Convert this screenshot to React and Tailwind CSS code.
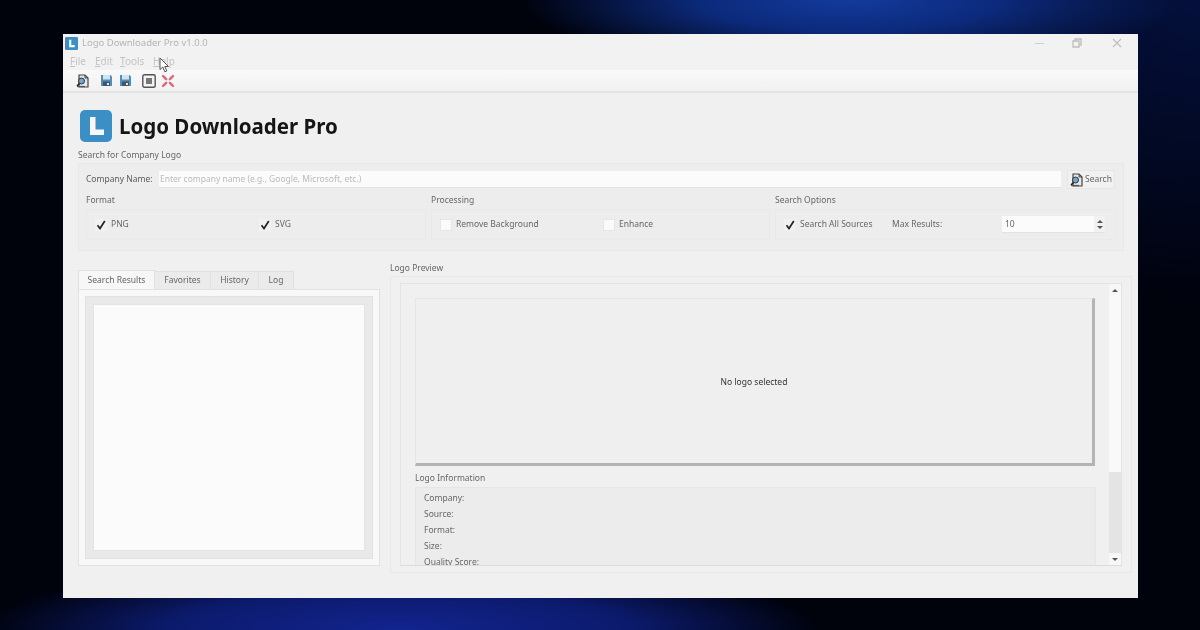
import React from "react";

const CheckMark = () => (
  <svg width="10" height="10" viewBox="0 0 10 10" className="block">
    <path d="M1.5 5.2 L4 8.5 L8.8 1" fill="none" stroke="#222" strokeWidth="1.7" />
  </svg>
);

const CheckBox = ({ label, checked }) => (
  <div className="flex items-center gap-[4px]">
    <div
      className={`w-[12px] h-[12px] flex items-center justify-center ${
        checked ? "bg-[#f1f1f1]" : "bg-[#fafafa] border border-[#e6e6e6]"
      }`}
    >
      {checked && <CheckMark />}
    </div>
    <span>{label}</span>
  </div>
);

const SearchDocIcon = ({ size = 14 }) => (
  <svg width={size} height={size} viewBox="0 0 14 14" className="block shrink-0">
    <path d="M3 1 H9 L12 4 V13 H3 Z" fill="#e8e8e8" stroke="#444" strokeWidth="1.2" />
    <path d="M9 1 V4 H12" fill="none" stroke="#444" />
    <circle cx="5.5" cy="7" r="3" fill="#6fa8d8" stroke="#333" />
    <path d="M3.5 9.5 L1 12" stroke="#222" strokeWidth="1.6" />
    <path d="M1 12.5 H9" stroke="#555" strokeWidth="1.2" />
  </svg>
);

const SaveIcon = () => (
  <svg width="13" height="13" viewBox="0 0 13 13" className="block">
    <path d="M1 1 H10.5 L12 2.5 V12 H1 Z" fill="#4f8fbd" />
    <rect x="3" y="1" width="7" height="4.5" fill="#d4e4ef" />
    <rect x="3" y="7.5" width="7" height="4.5" fill="#4a545e" />
    <rect x="7" y="9" width="2" height="2" fill="#e6e6e6" />
  </svg>
);

const StopIcon = () => (
  <svg width="14" height="14" viewBox="0 0 14 14" className="block">
    <rect x="0.8" y="0.8" width="12.4" height="12.4" rx="1.5" fill="#f3f3f3" stroke="#555" strokeWidth="1.4" />
    <rect x="4" y="4" width="6" height="6" fill="#777" />
  </svg>
);

const CollapseIcon = () => (
  <svg width="14" height="14" viewBox="0 0 14 14" className="block">
    <g fill="#d8657a" stroke="#d8657a" strokeWidth="0.8">
      <path d="M1 2 L2 1 L5.5 4 L6 6 L4 5.5 Z" />
      <path d="M13 2 L12 1 L8.5 4 L8 6 L10 5.5 Z" />
      <path d="M1 12 L2 13 L5.5 10 L6 8 L4 8.5 Z" />
      <path d="M13 12 L12 13 L8.5 10 L8 8 L10 8.5 Z" />
    </g>
  </svg>
);

const LogoMark = ({ size, radius }) => (
  <svg width={size} height={size} viewBox="0 0 32 32" className="block shrink-0">
    <rect width="32" height="32" rx={radius} fill="#3b8fc4" />
    <path d="M10 7 H15.5 V19.5 H24 V25 H10 Z" fill="#f5f7f8" />
  </svg>
);

const Cursor = () => (
  <svg width="11" height="16" viewBox="0 0 11 16" className="absolute left-[96px] top-[23px]">
    <path d="M1 1 V12.5 L3.8 10 L5.8 14.8 L7.8 14 L5.8 9.5 H9.5 Z" fill="#fff" stroke="#555" strokeWidth="1" />
  </svg>
);

const Tab = ({ label, width, active }) => (
  <div
    className={`flex items-center justify-center border-t border-r border-[#e0e0e0] ${
      active ? "bg-[#f7f7f7] h-[19px] border-l text-[#666]" : "bg-[#ebebeb] h-[18px]"
    }`}
    style={{ width }}
  >
    {label}
  </div>
);

export default function App() {
  return (
    <div className="w-[1200px] h-[630px] overflow-hidden pt-[34px] pl-[63px] bg-[#00020c] bg-[radial-gradient(ellipse_330px_70px_at_850px_0px,#133a9c_0%,#0c2a7c_45%,transparent_100%),radial-gradient(ellipse_420px_70px_at_400px_630px,#12248f_0%,#0c1a6c_55%,transparent_100%),radial-gradient(ellipse_420px_300px_at_1200px_0px,#04103c_0%,transparent_100%)]">
      <div
        className="relative w-[1075px] h-[564px] bg-[#f0f0f0] flex flex-col text-[8.5px] text-[#666] blur-[0.5px]"
        style={{ fontFamily: '"Noto Sans", "Open Sans", sans-serif' }}
      >
        {/* title bar */}
        <div className="h-[18px] flex items-center pl-[2px] bg-[#f2f2f2]">
          <LogoMark size={13} radius={3} />
          <span className="ml-[4px] text-[9.5px] text-[#b4b4b4]">Logo Downloader Pro v1.0.0</span>
          <div className="ml-auto flex items-center text-[#c2c2c2]">
            <div className="w-[9px] h-[1px] bg-[#cfcfcf] mr-[28px]"></div>
            <svg width="10" height="10" viewBox="0 0 10 10" className="block mr-[30px]">
              <path d="M1 3 H7 V9 H1 Z M3 3 V1 H9 V7 H7" fill="none" stroke="#bdbdbd" strokeWidth="1.3" />
            </svg>
            <svg width="10" height="10" viewBox="0 0 10 10" className="block mr-[16px]">
              <path d="M1 1 L9 9 M9 1 L1 9" stroke="#bdbdbd" strokeWidth="1.1" />
            </svg>
          </div>
        </div>

        {/* menu bar */}
        <div className="h-[18px] flex items-center pl-[7px] text-[10px] text-[#c4c4c4] bg-[#f2f2f2]">
          <span className="w-[25px]"><u>F</u>ile</span>
          <span className="w-[25px]"><u>E</u>dit</span>
          <span className="w-[33px]"><u>T</u>ools</span>
          <span><u>H</u>elp</span>
        </div>

        {/* toolbar */}
        <div className="h-[23px] flex items-center pl-[13px] border-b-2 border-[#e4e4e4] bg-[linear-gradient(#f9f9f9_0%,#f6f6f6_40%,#f1f1f1_100%)]">
          <SearchDocIcon />
          <div className="ml-[10px]"><SaveIcon /></div>
          <div className="ml-[6px]"><SaveIcon /></div>
          <div className="ml-[10px]"><StopIcon /></div>
          <div className="ml-[5px]"><CollapseIcon /></div>
        </div>

        <div className="flex-1 flex flex-col pl-[15px] pr-[6px]">
          {/* heading */}
          <div className="mt-[17px] h-[32px] flex items-center pl-[2px]">
            <LogoMark size={32} radius={5} />
            <h1 className="ml-[7px] pt-[1px] text-[20.5px] leading-none font-bold text-[#151515]">Logo Downloader Pro</h1>
          </div>

          {/* search group */}
          <div className="mt-[6px] h-[15px] leading-[14px]">Search for Company Logo</div>
          <div className="h-[88px] w-[1046px] bg-[#ededed] border border-[#e8e8e8] pl-[7px] pr-[6px] pt-[6px]">
            <div className="h-[19px] flex items-center">
              <span className="w-[73px] text-[#5a5a5a]">Company Name:</span>
              <div className="w-[902px] h-[17px] bg-[#fbfbfb] border-b border-[#e2e2e2] flex items-center pl-[1px] text-[#bbb]">
                Enter company name (e.g., Google, Microsoft, etc.)
              </div>
              <div className="ml-[6px] w-[48px] h-[19px] bg-[#f1f1f1] border border-[#e6e6e6] flex items-center justify-center gap-[1px]">
                <SearchDocIcon />
                <span>Search</span>
              </div>
            </div>
            <div className="mt-[4px] grid grid-cols-[340px_339px_342px] gap-x-[5px]">
              <div>
                <div className="h-[14px] leading-[14px]">Format</div>
                <div className="mt-[2px] h-[31px] border border-[#e9e9e9] grid grid-cols-[164px_1fr] items-center pl-[8px]">
                  <CheckBox label="PNG" checked />
                  <CheckBox label="SVG" checked />
                </div>
              </div>
              <div>
                <div className="h-[14px] leading-[14px]">Processing</div>
                <div className="mt-[2px] h-[31px] border border-[#e9e9e9] grid grid-cols-[163px_1fr] items-center pl-[8px]">
                  <CheckBox label="Remove Background" />
                  <CheckBox label="Enhance" />
                </div>
              </div>
              <div>
                <div className="h-[14px] leading-[14px]">Search Options</div>
                <div className="mt-[2px] h-[31px] border border-[#e9e9e9] flex items-center pl-[8px]">
                  <div className="w-[108px]"><CheckBox label="Search All Sources" checked /></div>
                  <span className="w-[110px]">Max Results:</span>
                  <div className="w-[103px] h-[17px] bg-[#fbfbfb] border-b border-[#e2e2e2] flex items-center justify-between pl-[3px]">
                    <span>10</span>
                    <div className="w-[11px] h-full bg-[#f1f1f1] flex flex-col items-center justify-center gap-[3px]">
                      <div className="w-0 h-0 border-x-[3px] border-x-transparent border-b-[3px] border-b-[#555]"></div>
                      <div className="w-0 h-0 border-x-[3px] border-x-transparent border-t-[3px] border-t-[#555]"></div>
                    </div>
                  </div>
                </div>
              </div>
            </div>
          </div>

          {/* panels */}
          <div className="mt-[10px] flex gap-[10px] items-start">
            {/* left tabs */}
            <div className="w-[302px] pt-[9px]">
              <div className="flex items-end">
                <Tab label="Search Results" width={77} active />
                <Tab label="Favorites" width={56} />
                <Tab label="History" width={48} />
                <Tab label="Log" width={35} />
              </div>
              <div className="h-[277px] bg-[#f8f8f8] border border-[#e2e2e2] p-[6px]">
                <div className="h-full bg-[#e9e9e9] border border-[#e2e2e2] p-[7px]">
                  <div className="h-full bg-[#fbfbfb] border border-[#e4e4e4]"></div>
                </div>
              </div>
            </div>

            {/* right preview */}
            <div className="w-[742px]">
              <div className="h-[15px] leading-[14px]">Logo Preview</div>
              <div className="h-[297px] border border-[#e8e8e8] px-[9px] pt-[6px]">
                <div className="h-[283px] border border-[#e4e4e4] border-b-[#dcdcdc] flex overflow-hidden">
                  <div className="w-[708px] pl-[14px] pt-[14px]">
                    <div className="w-[680px] h-[168px] pt-[3px] bg-[#efefef] border-r-[3px] border-b-[3px] border-[#b4b4b4] border-t border-l border-t-[#e6e6e6] border-l-[#e6e6e6] flex items-center justify-center text-[#333]">
                      No logo selected
                    </div>
                    <div className="mt-[5px] h-[14px] leading-[14px]">Logo Information</div>
                    <div className="mt-[2px] w-[681px] h-[100px] bg-[#ececec] border border-[#e6e6e6] pl-[8px] pt-[2px] leading-[16px]">
                      <div>Company:</div>
                      <div>Source:</div>
                      <div>Format:</div>
                      <div>Size:</div>
                      <div>Quality Score:</div>
                    </div>
                  </div>
                  <div className="w-[12px] flex flex-col">
                    <div className="h-[12px] bg-[#f7f7f7] flex items-center justify-center">
                      <div className="w-0 h-0 border-x-[3px] border-x-transparent border-b-[3px] border-b-[#555]"></div>
                    </div>
                    <div className="h-[176px] bg-[#f9f9f9]"></div>
                    <div className="flex-1 bg-[#e4e4e4]"></div>
                    <div className="h-[12px] bg-[#f7f7f7] flex items-center justify-center">
                      <div className="w-0 h-0 border-x-[3px] border-x-transparent border-t-[3px] border-t-[#555]"></div>
                    </div>
                  </div>
                </div>
              </div>
            </div>
          </div>
        </div>

        <Cursor />
      </div>
    </div>
  );
}
